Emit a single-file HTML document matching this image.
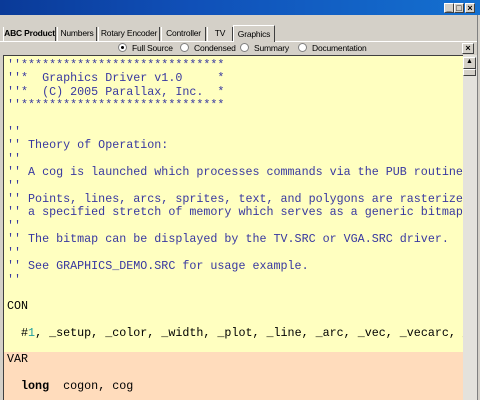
<!DOCTYPE html>
<html><head><style>
*{margin:0;padding:0;box-sizing:border-box}
body{width:480px;height:400px;overflow:hidden;background:#d4d0c8;position:relative;font-family:"Liberation Sans",sans-serif}
.title{position:absolute;left:0;top:0;width:480px;height:15px;background:linear-gradient(90deg,#0a3a98 0%,#1050b8 40%,#1470d0 100%)}
.wb{position:absolute;top:3px;width:10px;height:10px;background:#d4d0c8;border:1px solid;border-color:#fff #404040 #404040 #fff;font-size:9px;line-height:8px;text-align:center;font-weight:bold;color:#000}
.tab{position:absolute;top:27px;height:14px;font-size:8.5px;line-height:13px;text-align:center;border-left:1px solid #fff;border-right:1px solid #404040;color:#000;letter-spacing:-0.2px}
.radio{position:absolute;top:43px;font-size:8.5px;line-height:10px;color:#000;letter-spacing:-0.2px}
.radio i{display:inline-block;width:9px;height:9px;border-radius:50%;background:#fff;border:1px solid #808080;vertical-align:-1px;margin-right:5px;position:relative}
.ed{position:absolute;left:3px;top:55px;width:460px;height:345px;background:#ffffc0;border-left:1px solid #404040;border-top:1px solid #404040;overflow:hidden}
pre{position:absolute;left:3px;top:3px;font-family:"Liberation Mono",monospace;font-size:11.7px;line-height:13.4px;color:#3838a0;white-space:pre}
.k{color:#000;font-weight:bold}
.n{color:#000}
.sb{position:absolute;left:463px;top:55px;width:14px;height:345px;background:#e4e2dc}
</style></head><body>
<div class="title"></div>
<div class="wb" style="left:444px">_</div>
<div class="wb" style="left:454px">□</div>
<div class="wb" style="left:465px">×</div>
<div style="position:absolute;left:0;top:41px;width:480px;height:1px;background:#fff"></div>
<div class="tab" style="left:3px;width:53px;font-weight:bold">ABC Product</div>
<div class="tab" style="left:57px;width:40px">Numbers</div>
<div class="tab" style="left:98px;width:62px">Rotary Encoder</div>
<div class="tab" style="left:161px;width:45px">Controller</div>
<div class="tab" style="left:207px;width:26px">TV</div>
<div class="tab" style="left:233px;top:25px;height:17px;width:42px;background:#d4d0c8;border-top:1px solid #fff;line-height:16px">Graphics</div>
<div class="radio" style="left:118px"><i><b style="position:absolute;left:2px;top:2px;width:3px;height:3px;background:#000;border-radius:50%"></b></i>Full Source</div>
<div class="radio" style="left:180px"><i></i>Condensed</div>
<div class="radio" style="left:240px"><i></i>Summary</div>
<div class="radio" style="left:298px"><i></i>Documentation</div>
<div class="wb" style="left:462px;top:43px;width:12px;height:11px">×</div>
<div class="ed"><pre>''*****************************
''*  Graphics Driver v1.0     *
''*  (C) 2005 Parallax, Inc.  *
''*****************************

''
'' Theory of Operation:
''
'' A cog is launched which processes commands via the PUB routines.
''
'' Points, lines, arcs, sprites, text, and polygons are rasterized into
'' a specified stretch of memory which serves as a generic bitmap buffer.
''
'' The bitmap can be displayed by the TV.SRC or VGA.SRC driver.
''
'' See GRAPHICS_DEMO.SRC for usage example.
''

<span class="n">CON</span>

  <span class="n">#<span style="color:#20a0a0">1</span>, _setup, _color, _width, _plot, _line, _arc, _vec, _vecarc, _</span>
</pre>
<div style="position:absolute;left:0;top:296px;width:460px;height:60px;background:#ffdcbc"></div>
<pre style="top:297px"><span class="n">VAR</span>

  <span class="k">long</span><span class="n">  cogon, cog</span></pre>
</div>
<div class="sb"><div class="wb" style="left:0;top:2px;width:13px;height:12px;font-size:7px">▲</div><div class="wb" style="left:0;top:14px;width:13px;height:7px"></div></div>
<div style="position:absolute;left:477px;top:15px;width:3px;height:385px;background:#d4d0c8;border-left:1px solid #808080"></div>
</body></html>
